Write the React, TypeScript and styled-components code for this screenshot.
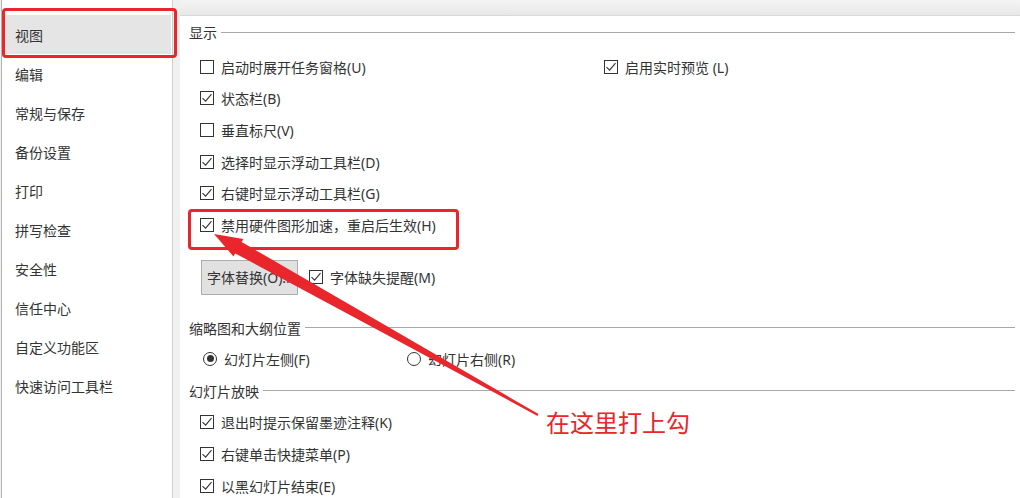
import styled, { createGlobalStyle } from 'styled-components';

const GlobalStyle = createGlobalStyle`
  html, body {
    margin: 0;
    padding: 0;
    background: #f0f0f0;
  }
  body {
    font-family: "Noto Sans", "Noto Sans CJK SC", sans-serif;
    color: #333;
  }
`;

const Page = styled.div`
  position: relative;
  width: 1020px;
  height: 498px;
  overflow: hidden;
  display: flex;
  background: #f0f0f0;
`;

const Sidebar = styled.nav`
  width: 170px;
  margin-left: 1px;
  border-left: 1px solid #b4b4b4;
  border-right: 1px solid #cdcdcd;
  background: #fff;
  padding-top: 15px;
  display: flex;
  flex-direction: column;
`;

const NavItem = styled.div<{ $active?: boolean }>`
  height: 39px;
  flex: none;
  display: flex;
  align-items: center;
  padding-left: 12px;
  margin: 0 1px;
  font-size: 14px;
  color: #333;
  background: ${(p) => (p.$active ? '#e5e5e5' : 'transparent')};
`;

const Main = styled.main`
  flex: 1;
  margin-left: 7px;
  display: flex;
  flex-direction: column;
  min-height: 0;
`;

const TopStrip = styled.div`
  height: 15px;
  flex: none;
  background: linear-gradient(#f4f4f4, #e8e8e8);
  border-bottom: 1px solid #d8d8d8;
`;

const Panel = styled.div`
  flex: 1;
  min-height: 0;
  overflow: hidden;
  background: #fff;
  padding-left: 9px;
  padding-right: 5px;
  display: flex;
  flex-direction: column;

  & > * {
    flex-shrink: 0;
  }
`;

const SectionHead = styled.div<{ $mt?: number }>`
  height: 30px;
  margin-top: ${(p) => p.$mt ?? 0}px;
  display: flex;
  align-items: center;
  gap: 4px;
  font-size: 14px;
  color: #333;

  &::after {
    content: '';
    flex: 1;
    height: 1px;
    background: #a8a8a8;
  }
`;

const List = styled.div<{ $mt?: number }>`
  margin-top: ${(p) => p.$mt ?? 0}px;
  padding-left: 11px;
  display: flex;
  flex-direction: column;
`;

const Row = styled.div<{ $h?: number }>`
  height: ${(p) => p.$h ?? 31.6}px;
  flex: none;
  display: grid;
  grid-template-columns: 404px 1fr;
  align-items: center;
`;

const Option = styled.label`
  display: flex;
  align-items: center;
  gap: 7px;
  font-size: 14px;
  color: #333;
  white-space: nowrap;
`;

const Box = styled.span`
  width: 14px;
  height: 14px;
  box-sizing: border-box;
  border: 1px solid #333;
  display: inline-flex;
  align-items: center;
  justify-content: center;
  flex: none;
`;

const Circle = styled.span<{ $on?: boolean }>`
  width: 14px;
  height: 14px;
  box-sizing: border-box;
  border: 1px solid #333;
  border-radius: 50%;
  display: inline-flex;
  align-items: center;
  justify-content: center;
  flex: none;

  &::after {
    content: '';
    width: 7px;
    height: 7px;
    border-radius: 50%;
    background: ${(p) => (p.$on ? '#333' : 'transparent')};
  }
`;

const ButtonRow = styled.div`
  margin-top: 19px;
  height: 35px;
  padding-left: 12px;
  display: flex;
  align-items: center;
  gap: 11px;
`;

const GrayButton = styled.button`
  width: 97px;
  height: 35px;
  box-sizing: border-box;
  border: 1px solid #adadad;
  background: #e1e1e1;
  font-family: inherit;
  font-size: 14px;
  color: #333;
  padding: 0 0 0 5px;
  text-align: left;
  white-space: nowrap;
  overflow: hidden;
`;

const RadioRow = styled.div`
  height: 32px;
  padding-left: 14px;
  display: grid;
  grid-template-columns: 204px 1fr;
  align-items: center;
`;

const RedBox = styled.div<{ $x: number; $y: number; $w: number; $h: number }>`
  position: absolute;
  left: ${(p) => p.$x}px;
  top: ${(p) => p.$y}px;
  width: ${(p) => p.$w}px;
  height: ${(p) => p.$h}px;
  box-sizing: border-box;
  border: 3px solid #e8262b;
  border-radius: 4px;
  pointer-events: none;
`;

const ArrowLayer = styled.svg`
  position: absolute;
  left: 0;
  top: 0;
  pointer-events: none;
`;

const Note = styled.div`
  position: absolute;
  left: 546px;
  top: 405px;
  font-family: "Noto Sans CJK SC", sans-serif;
  font-size: 24px;
  line-height: 34px;
  color: #e8262b;
  white-space: nowrap;
`;

const Check = () => (
  <svg width="12" height="12" viewBox="0 0 12 12">
    <path d="M1.5 6.2 L4.6 9.2 L10.5 2.2" fill="none" stroke="#333" strokeWidth="1.1" />
  </svg>
);

function CheckOption({ label, checked }: { label: string; checked?: boolean }) {
  return (
    <Option>
      <Box>{checked && <Check />}</Box>
      {label}
    </Option>
  );
}

const navItems = ['视图', '编辑', '常规与保存', '备份设置', '打印', '拼写检查', '安全性', '信任中心', '自定义功能区', '快速访问工具栏'];

const showOptions: [string, boolean][] = [
  ['状态栏(B)', true],
  ['垂直标尺(V)', false],
  ['选择时显示浮动工具栏(D)', true],
  ['右键时显示浮动工具栏(G)', true],
  ['禁用硬件图形加速，重启后生效(H)', true],
];

const slideOptions = ['退出时提示保留墨迹注释(K)', '右键单击快捷菜单(P)', '以黑幻灯片结束(E)'];

export default function App() {
  return (
    <>
      <GlobalStyle />
      <Page>
        <Sidebar>
          {navItems.map((n, i) => (
            <NavItem key={n} $active={i === 0}>
              {n}
            </NavItem>
          ))}
        </Sidebar>
        <Main>
          <TopStrip />
          <Panel>
            <SectionHead $mt={1}>显示</SectionHead>
            <List $mt={4}>
              <Row>
                <CheckOption label="启动时展开任务窗格(U)" />
                <CheckOption label="启用实时预览 (L)" checked />
              </Row>
              {showOptions.map(([label, on]) => (
                <Row key={label}>
                  <CheckOption label={label} checked={on} />
                </Row>
              ))}
            </List>
            <ButtonRow>
              <GrayButton type="button">字体替换(O)...</GrayButton>
              <CheckOption label="字体缺失提醒(M)" checked />
            </ButtonRow>
            <SectionHead $mt={18}>缩略图和大纲位置</SectionHead>
            <RadioRow>
              <Option>
                <Circle $on />
                幻灯片左侧(F)
              </Option>
              <Option>
                <Circle />
                幻灯片右侧(R)
              </Option>
            </RadioRow>
            <SectionHead $mt={1}>幻灯片放映</SectionHead>
            <List>
              {slideOptions.map((s) => (
                <Row key={s} $h={32}>
                  <CheckOption label={s} checked />
                </Row>
              ))}
            </List>
          </Panel>
        </Main>

        <RedBox $x={2} $y={8} $w={175} $h={50} />
        <RedBox $x={188} $y={209} $w={271} $h={41} />
        <ArrowLayer width="1020" height="498" viewBox="0 0 1020 498">
          <polygon
            points="214,234 243.3,239 241.6,242 538.5,414.1 537.5,415.9 235.2,253.4 233.5,256.4"
            fill="#e8262b"
          />
        </ArrowLayer>
        <Note>在这里打上勾</Note>
      </Page>
    </>
  );
}
